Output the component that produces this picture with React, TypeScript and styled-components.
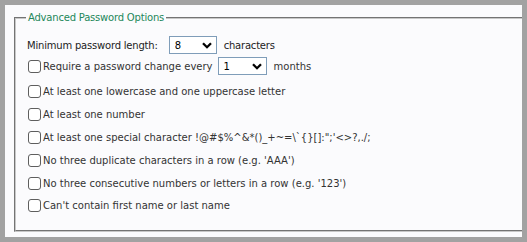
import React from "react";
import styled, { createGlobalStyle } from "styled-components";

const GlobalStyle = createGlobalStyle`
  html, body { margin: 0; padding: 0; }
  body {
    background: #a2a2a2;
    padding: 5px;
    box-sizing: border-box;
    height: 242px;
    font-family: "DejaVu Sans", Verdana, sans-serif;
    font-size: 10px;
    color: #333;
  }
  #root { height: 100%; }
`;

const Panel = styled.div`
  background: #fbfbfd;
  height: 232px;
  overflow: hidden;
  box-sizing: border-box;
  display: flex;
  flex-direction: column;
  padding: 6px 0 5px 9px;
`;

const Fieldset = styled.fieldset`
  flex: 1;
  margin: 0 -12px 0 0;
  padding: 11px 0 0 10px;
  border: 2px groove #c8c8c8;
  min-width: 0;
  display: flex;
  flex-direction: column;
`;

const Legend = styled.legend`
  color: #23875a;
  padding: 0 2px;
  line-height: 14px;
  font-size: 10px;
  letter-spacing: -0.2px;
`;

const Row = styled.div<{ $h?: number; $mt?: number; $pl?: number }>`
  display: flex;
  align-items: center;
  height: ${(p) => p.$h ?? 22.8}px;
  margin-top: ${(p) => p.$mt ?? 0}px;
  padding-left: ${(p) => p.$pl ?? 2}px;
  white-space: nowrap;
`;

const Label = styled.label`
  display: flex;
  align-items: center;
  gap: 2px;
  cursor: pointer;
`;

const Check = styled.input.attrs({ type: "checkbox" })`
  appearance: none;
  margin: 0;
  width: 13px;
  height: 13px;
  border: 1px solid #5e5e5e;
  border-radius: 3px;
  background: #fff;
  box-sizing: border-box;
`;

const Strong = styled.span`
  color: #222;
  letter-spacing: -0.2px;
`;

const SelectWrap = styled.div<{ $w: number; $ml: number }>`
  position: relative;
  width: ${(p) => p.$w}px;
  height: 18px;
  margin: 0 7px 0 ${(p) => p.$ml}px;
`;

const Select = styled.select`
  appearance: none;
  width: 100%;
  height: 100%;
  margin: 0;
  border: 1px solid #7f9db9;
  background: #fff;
  padding: 0 0 0 5px;
  font: inherit;
  font-size: 10px;
  color: #000;
  outline: none;
`;

const Chevron = styled.svg`
  position: absolute;
  right: 5px;
  top: 6px;
  width: 10px;
  height: 7px;
  pointer-events: none;
`;

const Dropdown: React.FC<{ value: string; options: string[]; width: number; ml: number }> = ({
  value,
  options,
  width,
  ml,
}) => (
  <SelectWrap $w={width} $ml={ml}>
    <Select defaultValue={value}>
      {options.map((o) => (
        <option key={o}>{o}</option>
      ))}
    </Select>
    <Chevron viewBox="0 0 10 7">
      <path d="M1 1.2 L5 5.2 L9 1.2" fill="none" stroke="#000" strokeWidth="2.3" />
    </Chevron>
  </SelectWrap>
);

const rules = [
  "At least one lowercase and one uppercase letter",
  "At least one number",
  "At least one special character !@#$%^&*()_+~=\\`{}[]:\";'<>?,./;",
  "No three duplicate characters in a row (e.g. 'AAA')",
  "No three consecutive numbers or letters in a row (e.g. '123')",
  "Can't contain first name or last name",
];

export default function App() {
  return (
    <>
      <GlobalStyle />
      <Panel>
        <Fieldset>
          <Legend>Advanced Password Options</Legend>
          <Row $h={18} $pl={1}>
            <Strong>Minimum password length:</Strong>
            <Dropdown value="8" options={["6", "7", "8", "9", "10", "12"]} width={48} ml={11} />
            <Strong>characters</Strong>
          </Row>
          <Row $h={18} $mt={3}>
            <Label>
              <Check />
              Require a password change every
            </Label>
            <Dropdown value="1" options={["1", "2", "3", "6", "12"]} width={49} ml={5} />
            months
          </Row>
          <Row $mt={5.6}>
            <Label>
              <Check />
              {rules[0]}
            </Label>
          </Row>
          {rules.slice(1).map((r) => (
            <Row key={r}>
              <Label>
                <Check />
                {r}
              </Label>
            </Row>
          ))}
        </Fieldset>
      </Panel>
    </>
  );
}
